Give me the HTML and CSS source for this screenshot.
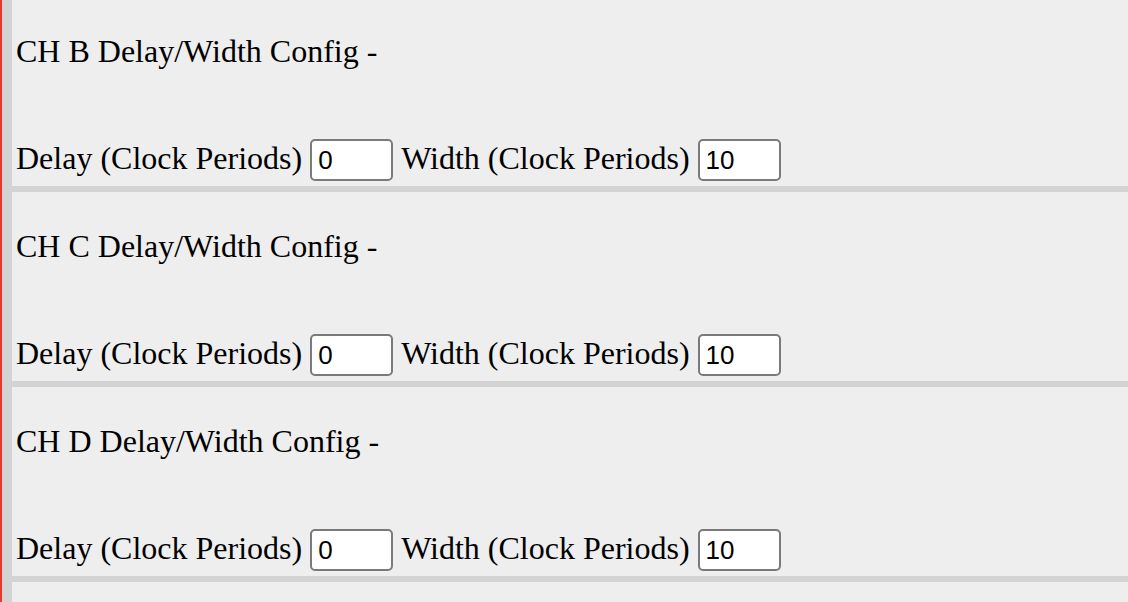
FILE: index.html
```html
<!DOCTYPE html>
<html>
<head>
<meta charset="utf-8">
<link rel="stylesheet" href="styles.css">
</head>
<body>
<div class="page">
  <div class="rail"></div>
  <div class="strip"></div>
  <main class="main">
    <section class="panel first">
      <div class="heading">CH B Delay/Width Config -</div>
      <div class="row">
        <label class="lbl">Delay (Clock Periods)</label>
        <input class="num" type="text" value="0">
        <label class="lbl">Width (Clock Periods)</label>
        <input class="num" type="text" value="10">
      </div>
    </section>
    <section class="panel">
      <div class="heading">CH C Delay/Width Config -</div>
      <div class="row">
        <label class="lbl">Delay (Clock Periods)</label>
        <input class="num" type="text" value="0">
        <label class="lbl">Width (Clock Periods)</label>
        <input class="num" type="text" value="10">
      </div>
    </section>
    <section class="panel">
      <div class="heading">CH D Delay/Width Config -</div>
      <div class="row">
        <label class="lbl">Delay (Clock Periods)</label>
        <input class="num" type="text" value="0">
        <label class="lbl">Width (Clock Periods)</label>
        <input class="num" type="text" value="10">
      </div>
    </section>
  </main>
</div>
</body>
</html>
```
FILE: styles.css
```css
html, body {
  margin: 0;
  padding: 0;
  overflow: hidden;
  background: #eeeeee;
}

.page {
  display: flex;
  min-height: 100vh;
  font-family: "Liberation Serif", "Times New Roman", serif;
  font-size: 32px;
  color: #000;
}

.rail {
  width: 2px;
  flex: none;
  background: #e8392b;
}

.strip {
  width: 10px;
  flex: none;
  background: #d3d3d3;
}

.main {
  flex: 1;
  background: #eeeeee;
}

.panel {
  padding: 36px 4px 5px 4px;
  border-bottom: 6px solid #d3d3d3;
}

.panel.first {
  padding-top: 33px;
}

.heading {
  line-height: 37px;
  height: 37px;
}

.row {
  margin-top: 69px;
  display: flex;
  align-items: baseline;
  gap: 8px;
  line-height: 37px;
}

.lbl {
  white-space: nowrap;
}

.num {
  box-sizing: border-box;
  width: 83px;
  height: 42px;
  margin: 0;
  padding: 0 6px;
  border: 2px solid #7a7a7a;
  border-radius: 5px;
  background: #ffffff;
  font-family: "Liberation Sans", Arial, sans-serif;
  font-size: 26px;
  color: #000;
  outline: none;
}
```
